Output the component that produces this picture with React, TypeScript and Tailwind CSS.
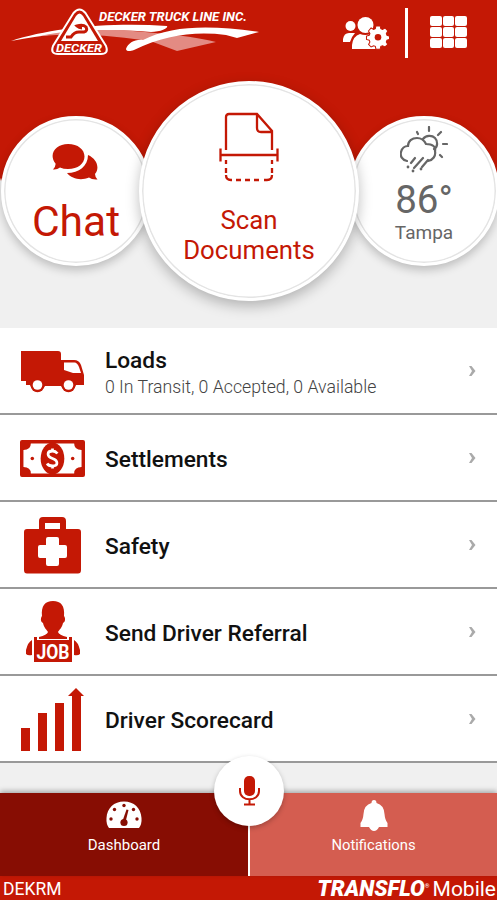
import type { ReactNode } from 'react';

function DeckerLogo() {
  return (
    <svg width="270" height="70" viewBox="0 0 270 70" className="block shrink-0" fill="#fff">
      <path d="M11 41C50 28 110 22 167 26C169 28 160 32 151 32C100 28 55 33 11 41Z" />
      <path d="M40 36C75 28 120 29 155 33C180 35 200 38 216 42L177 51L153 42C120 36 80 33 40 36Z" fill="#e38b83" />
      <path d="M126 49C128 43 135 39 143 40C172 25 212 25 259 32L237 38L226 35C195 31 165 35 134 50C129 52 126 51 126 49Z" />
      <path
        d="M73.500 13Q79.500 6 85.500 13L106 46Q109 54 101 54H58Q50 54 53 46Z"
        fill="#c41805"
        stroke="#fff"
        strokeWidth="2"
      />
      <path d="M76 16Q79.500 11 83 16L98 41H61Z" />
      <path d="M66 37H71Q74 32 79 32H84Q88 31 86 27Q83 24 77 26Q79 28 82 28" fill="none" stroke="#c41805" strokeWidth="3" />
      <text x="56" y="51.500" fontSize="10.500" fontWeight="700" fontStyle="italic" fontFamily="Roboto, sans-serif" textLength="46" lengthAdjust="spacingAndGlyphs">
        DECKER
      </text>
      <text x="99" y="21" fontSize="12" fontWeight="700" fontStyle="italic" fontFamily="Roboto, sans-serif" textLength="148" lengthAdjust="spacingAndGlyphs">
        DECKER TRUCK LINE INC.
      </text>
    </svg>
  );
}

function UsersGearIcon() {
  return (
    <svg width="46" height="36" viewBox="0 0 46 36" fill="#fff">
      <circle cx="7.500" cy="10" r="5" />
      <circle cx="22.500" cy="9" r="8" />
      <path d="M0 26V23Q1 17 6 17H12Q9 20 7 26Z" />
      <path d="M9 33V29Q10 20 17 18Q22 20 28 18L33 33Z" />
      <g stroke="#c41805" strokeWidth="1.200">
        <path d="M32.700 10h5l.8 3.300 2 .9 3-1.700 3.300 3.600-1.800 2.900.8 2.200 3.200.9v4l-3.200 1-.8 2 1.800 3-3.300 3-3-1.500-2 .8-.8 3.300h-5l-.8-3.300-2-.8-3 1.500-3-3 1.600-3-.8-2-3.300-1v-4l3.300-.9.8-2.200-1.700-2.900 3.100-3.600 3 1.700 2-.9z" transform="translate(5.500 1.500) scale(.84)" />
        <circle cx="35" cy="21.300" r="3.300" fill="#c41805" stroke="none" />
      </g>
    </svg>
  );
}

function ChatIcon() {
  return (
    <svg width="46" height="37" viewBox="0 0 46 37" fill="#c41805">
      <path d="M36 11C45 15 48 24 43 30Q43 33 45.500 35.500Q40 36 37 33.500C29 37 20 35 15 29C27 29 36 22 36 11Z" />
      <path d="M16 0C26 0 32.500 5.500 32.500 12.500S26 25 16 25Q11.500 25 8 23.500Q5 26 1 25.500Q4 22 3.500 19.500C-4 10 4 0 16 0Z" />
    </svg>
  );
}

function ScanIcon() {
  return (
    <svg width="60" height="71" viewBox="0 0 60 71" fill="none" stroke="#c41805" strokeWidth="2.300">
      <path d="M7 38V5Q7 2 10 2H38L53 19V38M38 2V16Q38 20 42 20H53" />
      <path d="M1.500 43H58.500M1.500 36.500V49.500M58.500 36.500V49.500" />
      <path d="M7 48V52M7 56V61M53 48V52M53 56V61M17 68H22M26 68H31M35 68H40" />
      <path d="M7 63Q7 68 12 68H13M45 68H48Q53 68 53 63" />
    </svg>
  );
}

function WeatherIcon() {
  return (
    <svg width="48" height="48" viewBox="0 0 48 48" fill="none" stroke="#666" strokeWidth="2.200" strokeLinecap="round">
      <path d="M7 35C2 34 0 30 1 26C2 22 5 20 8 20C8 15 12 12 17 12C21 12 24 14 26 18C33 18 36 21 35 25C36 30 33 34 28 35" />
      <path d="M23 13C26 9 32 9 35 12C38 15 38 21 34 23" />
      <path d="M29 1V5M17 6L18 8M41 6L38 9M43 18H47M40 29L42 31M15 32L11 37M23 32L14 42M28 34L22 41" />
      <path d="M8 41V41M21 43V43M13 45V45" strokeWidth="2.800" />
    </svg>
  );
}

function TruckIcon() {
  return (
    <svg width="64" height="43" viewBox="0 0 64 43" fill="#c41805">
      <path d="M0 1H37Q40 1 40 4V10H53Q58 10 60 15L63 25V35H55A8 8 0 0 1 40 36H24A8 8 0 0 1 9 35H5V31H0Z" />
      <path d="M43 12.500H53Q56 12 58 17L60 23H52L43 20Z" fill="#fff" />
      <circle cx="16.500" cy="35.500" r="6.800" />
      <circle cx="47.500" cy="35.500" r="6.800" />
      <circle cx="16.500" cy="35" r="4.800" fill="#fff" />
      <circle cx="47.500" cy="35" r="4.800" fill="#fff" />
    </svg>
  );
}

function MoneyIcon() {
  return (
    <svg width="65" height="37" viewBox="0 0 66 37" preserveAspectRatio="none" fill="#c41805">
      <rect width="66" height="37" rx="2" />
      <path d="M11 3.500H55Q55 10 62.500 10V27Q55 27 55 33.500H11Q11 27 3.500 27V10Q11 10 11 3.500Z" fill="#fff" />
      <ellipse cx="33" cy="18.500" rx="12" ry="16" />
      <circle cx="12.500" cy="18.500" r="1.800" />
      <circle cx="53.500" cy="18.500" r="1.800" />
      <path d="M38 13.500Q36 11 33 11Q28.500 11 28.500 14Q28.500 17 33 18.500Q37.500 20 37.500 23Q37.500 26 33 26Q29 26 27.500 23.500M33 8.500V11M33 26V28.500" fill="none" stroke="#fff" strokeWidth="2.800" />
    </svg>
  );
}

function SafetyIcon() {
  return (
    <svg width="57" height="57" viewBox="0 0 57 57" fill="#c41805">
      <path fillRule="evenodd" d="M15 12V4Q15 0 19 0H38Q42 0 42 4V12H54Q57 12 57 15V53Q57 56.500 54 56.500H3Q0 56.500 0 53V15Q0 12 3 12ZM21 12H36V6H21Z" />
      <path d="M24 20H33Q35 20 35 22V28H41Q43 28 43 30V39Q43 41 41 41H35V47Q35 49 33 49H24Q22 49 22 47V41H16Q14 41 14 39V30Q14 28 16 28H22V22Q22 20 24 20Z" fill="#fff" />
    </svg>
  );
}

function JobIcon() {
  return (
    <svg width="54" height="62" viewBox="0 0 54 62" fill="#c41805">
      <path d="M27 0C35 0 39 5 38 15C40 18 39 21 37 22C36 27 33 29 32 31Q33 34 41 36V38H13V36Q21 34 22 31C21 29 18 27 17 22C15 21 14 18 16 15C15 5 19 0 27 0Z" />
      <path d="M11 36H8V61H46V36H43V39H11ZM6 39Q2 41 0 49V53Q2 55 6 54ZM48 39Q52 41 54 49V53Q52 55 48 54Z" />
      <text x="10.500" y="57.500" fill="#fff" fontSize="20" fontWeight="700" fontFamily="Roboto, sans-serif" textLength="33" lengthAdjust="spacingAndGlyphs">
        JOB
      </text>
    </svg>
  );
}

function ScorecardIcon() {
  return (
    <svg width="63" height="63" viewBox="0 0 63 63" fill="#c41805">
      <path d="M0 40H9V63H0ZM17 25H26V63H17ZM34 15H43V63H34ZM51 8H47L55 0L63 8H60V63H51Z" />
    </svg>
  );
}

function GaugeIcon() {
  return (
    <svg width="36" height="28" viewBox="0 0 36 28">
      <path d="M3 27Q0 23 .5 17C1 7 8 .5 18 .5S35 7 35.500 17Q36 23 33 27Z" fill="#fff" />
      <g fill="#870d03">
        <circle cx="18" cy="4.500" r="1.700" />
        <circle cx="8.500" cy="8.500" r="1.700" />
        <circle cx="27.500" cy="8.500" r="1.700" />
        <circle cx="5" cy="18" r="1.700" />
        <circle cx="31" cy="18" r="1.700" />
        <circle cx="18" cy="21.500" r="3.600" />
        <path d="M16.500 20L20.500 8.500L22.500 9L19.500 21Z" />
      </g>
    </svg>
  );
}

function BellIcon() {
  return (
    <svg width="28" height="31" viewBox="0 0 28 31" fill="#fff">
      <path d="M14 0Q16.500 0 16.500 3Q24 5 24.500 14Q25 20 27.500 23V27H.500V23Q3 20 3.500 14Q4 5 11.500 3Q11.500 0 14 0Z" />
      <path d="M9 27H19Q17 31 14 31T9 27Z" />
    </svg>
  );
}

function MicIcon() {
  return (
    <svg width="23" height="30" viewBox="0 0 23 30">
      <rect x="6" y="0" width="11" height="20" rx="5" fill="#c41805" />
      <path d="M2 12V15C2 26 21 26 21 15V12M11.500 23V28.500M6 28.500H17" fill="none" stroke="#c41805" strokeWidth="2" />
    </svg>
  );
}

interface MenuItem {
  title: string;
  subtitle?: string;
  icon: ReactNode;
}

const menuItems: MenuItem[] = [
  { title: 'Loads', subtitle: '0 In Transit, 0 Accepted, 0 Available', icon: <TruckIcon /> },
  { title: 'Settlements', icon: <MoneyIcon /> },
  { title: 'Safety', icon: <SafetyIcon /> },
  { title: 'Send Driver Referral', icon: <JobIcon /> },
  { title: 'Driver Scorecard', icon: <ScorecardIcon /> },
];

function MenuRow({ title, subtitle, icon }: MenuItem) {
  return (
    <div className="flex h-[87px] items-center border-b-2 border-[#999] bg-white">
      <div className="flex w-[105px] shrink-0 justify-center pt-px">{icon}</div>
      <div className="flex-1 pt-[5px]">
        <div className="text-[22.7px] leading-[26px] font-medium text-[#111]">{title}</div>
        {subtitle && <div className="mt-px text-[17.7px] leading-6 font-light text-[#444]">{subtitle}</div>}
      </div>
      <svg width="8" height="12" viewBox="0 0 8 12" className="mt-px mr-[21px]" fill="#aaa">
        <path d="M1 1H3.500L7.500 6L3.500 11H1L4 6Z" />
      </svg>
    </div>
  );
}

export default function App() {
  return (
    <div className="flex h-[900px] w-[497px] flex-col overflow-hidden bg-[#f0f0f0] font-['Roboto',sans-serif]">
      <div className="h-[328px] shrink-0 bg-linear-to-b from-[#c41805] from-[178px] to-[#f0f0f0] to-[181px]">
        <header className="flex h-[70px]">
          <DeckerLogo />
          <div className="flex flex-1 items-start pt-2">
            <div className="ml-[73px] mt-[8px]">
              <UsersGearIcon />
            </div>
            <div className="ml-4 h-[50px] w-[3px] bg-white" />
            <div className="ml-[22px] mt-2 grid grid-cols-3 gap-px">
              {Array.from({ length: 9 }, (_, i) => (
                <div key={i} className="h-[10px] w-[11.5px] rounded-[2px] bg-white" />
              ))}
            </div>
          </div>
        </header>

        {/* Shortcut circles */}
        <div className="flex h-[242px] items-center">
          <div className="ml-px flex size-[150px] shrink-0 flex-col items-center rounded-full border-3 border-white bg-white pt-[25px] text-[#c41805] shadow-[0_4px_10px_rgba(0,0,0,0.22),inset_0_0_0_1.5px_#e4e4e4]">
            <div className="-ml-[3px]">
              <ChatIcon />
            </div>
            <div className="mt-[16px] text-[42.5px] leading-[50px]">Chat</div>
          </div>
          <div className="z-10 -mr-[10px] -ml-3 flex size-[220px] shrink-0 flex-col items-center rounded-full border-3 border-white bg-white pt-[28px] text-[#c41805] shadow-[0_5px_14px_rgba(0,0,0,0.26),inset_0_0_0_1.5px_#e4e4e4]">
            <ScanIcon />
            <div className="mt-[22px] text-center text-[25.8px] leading-[30px]">
              Scan
              <br />
              Documents
            </div>
          </div>
          <div className="flex size-[150px] shrink-0 flex-col items-center rounded-full border-3 border-white bg-white pt-[7px] text-[#666] shadow-[0_4px_10px_rgba(0,0,0,0.22),inset_0_0_0_1.5px_#e4e4e4]">
            <WeatherIcon />
            <div className="mt-[3px] text-[38.5px] leading-[46px]">86°</div>
            <div className="-mt-[2px] text-[19px] leading-6">Tampa</div>
          </div>
        </div>
      </div>

      <main className="shrink-0">
        {menuItems.map(item => (
          <MenuRow key={item.title} {...item} />
        ))}
      </main>

      <nav className="relative mt-auto flex h-[83px] shrink-0 text-white shadow-[0_-2px_5px_rgba(0,0,0,0.3)]">
        <div className="flex w-[248px] flex-col items-center bg-[#870d03] pt-2">
          <GaugeIcon />
          <div className="mt-[7px] text-[15px] leading-[18px]">Dashboard</div>
        </div>
        <div className="flex flex-1 flex-col items-center border-l-2 border-white bg-[#d45d50] pt-[7px]">
          <BellIcon />
          <div className="mt-[5px] text-[14.8px] leading-[18px]">Notifications</div>
        </div>
        <div className="absolute -top-[37px] left-[214px] flex size-[70px] items-center justify-center rounded-full bg-white shadow-[0_2px_5px_rgba(0,0,0,0.25)]">
          <MicIcon />
        </div>
      </nav>
      <footer className="flex h-6 shrink-0 items-center justify-between bg-[#c41805] pr-px pl-[3px] leading-none text-white">
        <span className="pt-[3px] text-[17.5px]">DEKRM</span>
        <span className="flex items-center pt-[2px] text-[21px]">
          <b className="text-[22px] font-black italic">TRANSFLO</b>
          <sup className="text-[6px]">®</sup>
          <span className="ml-[3px]">Mobile</span>
        </span>
      </footer>
    </div>
  );
}
